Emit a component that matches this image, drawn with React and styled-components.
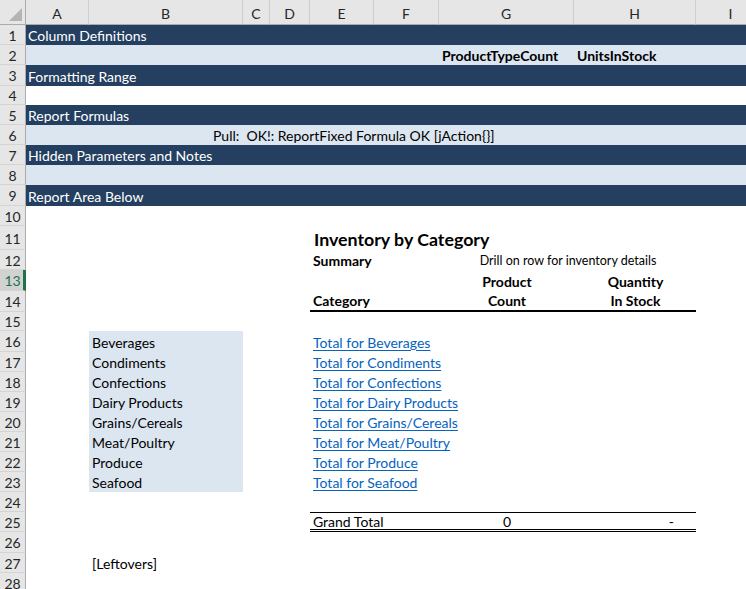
import React from 'react'
import styled, { createGlobalStyle } from 'styled-components'

const GlobalStyle = createGlobalStyle`
  html, body {
    margin: 0;
    padding: 0;
    background: #fff;
    overflow: hidden;
  }
`

const colWidths = [26, 63, 154, 27, 40, 64, 65, 135, 122, 70]
const colLetters = ['A', 'B', 'C', 'D', 'E', 'F', 'G', 'H', 'I']
const rowHeights = [20, 20, 21, 19, 20, 20, 20, 20, 21, 20, 24, 20, 21, 21, 19, 21, 20, 20, 20, 20, 20, 20, 20, 20, 20, 21, 20, 20]

const COL = { A: 2, B: 3, C: 4, D: 5, E: 6, F: 7, G: 8, H: 9, I: 10 }

const Sheet = styled.div`
  display: grid;
  grid-template-columns: ${colWidths.map(w => w + 'px').join(' ')};
  grid-template-rows: 25px ${rowHeights.map(h => h + 'px').join(' ')};
  width: 746px;
  height: 589px;
  overflow: hidden;
  font-family: Lato, "Open Sans", sans-serif;
  font-size: 14px;
  color: #000;
`

const Corner = styled.div`
  grid-row: 1;
  grid-column: 1;
  background: #e6e6e6;
  border-right: 1px solid #ababab;
  border-bottom: 1px solid #ababab;
  display: flex;
  align-items: flex-end;
  justify-content: flex-end;
  padding: 0 3px 3px 0;
`

const ColHeader = styled.div`
  grid-row: 1;
  grid-column: ${p => p.$col};
  background: #e6e6e6;
  border-bottom: 1px solid #ababab;
  border-right: 1px solid #cfcfcf;
  display: flex;
  align-items: center;
  justify-content: center;
  font-size: 14px;
  color: #262626;
  padding-top: 3px;
`

const RowHeader = styled.div`
  grid-column: 1;
  grid-row: ${p => p.$row + 1};
  background: ${p => (p.$active ? '#d2d2d2' : '#e6e6e6')};
  color: ${p => (p.$active ? '#217346' : '#262626')};
  border-bottom: 1px solid #d4d4d4;
  border-right: ${p => (p.$active ? '3px solid #217346' : '1px solid #ababab')};
  display: flex;
  align-items: center;
  justify-content: center;
  font-size: 14px;
  padding-top: 1px;
  padding-left: ${p => (p.$active ? '2px' : '0')};
`

const Band = styled.div`
  grid-column: 2 / -1;
  grid-row: ${p => p.$row + 1};
  display: flex;
  align-items: flex-end;
  background: ${p => (p.$tone === 'dark' ? '#243f60' : p.$tone === 'light' ? '#dce6f1' : '#fff')};
  color: ${p => (p.$tone === 'dark' ? '#fff' : '#000')};
  line-height: 18px;
  padding-left: 2px;
  white-space: nowrap;
`

const Cell = styled.div`
  grid-column: ${p => p.$col} / span ${p => p.$span || 1};
  grid-row: ${p => p.$row + 1};
  display: flex;
  align-items: flex-end;
  justify-content: ${p => (p.$align === 'center' ? 'center' : p.$align === 'right' ? 'flex-end' : 'flex-start')};
  padding: 0 ${p => p.$padRight || 2}px 0 3px;
  line-height: 18px;
  white-space: nowrap;
  font-weight: ${p => (p.$bold ? 700 : 400)};
  font-size: ${p => p.$size || 14}px;
  min-width: 0;
`

const HeadCell = styled(Cell)`
  border-bottom: 2px solid #000;
`

const TotalCell = styled(Cell)`
  border-top: 1px solid #000;
  border-bottom: 3px double #000;
  align-items: center;
  padding-top: 1px;
`

const Title = styled(Cell)`
  font-size: 17.8px;
  padding-bottom: 2px;
  padding-left: 4px;
`

const Shade = styled.div`
  grid-column: ${COL.B};
  grid-row: 17 / 25;
  background: #dce6f1;
`

const Link = styled.span`
  color: #0563c1;
  text-decoration: underline;
  text-underline-offset: 2px;
`

const categories = [
  'Beverages',
  'Condiments',
  'Confections',
  'Dairy Products',
  'Grains/Cereals',
  'Meat/Poultry',
  'Produce',
  'Seafood',
]

const bands = [
  { row: 1, tone: 'dark', text: 'Column Definitions' },
  { row: 2, tone: 'light' },
  { row: 3, tone: 'dark', text: 'Formatting Range' },
  { row: 5, tone: 'dark', text: 'Report Formulas' },
  { row: 6, tone: 'light' },
  { row: 7, tone: 'dark', text: 'Hidden Parameters and Notes' },
  { row: 8, tone: 'light' },
  { row: 9, tone: 'dark', text: 'Report Area Below' },
]

const App = () => (
  <>
    <GlobalStyle />
    <Sheet>
      <Corner>
        <svg width="13" height="13" viewBox="0 0 13 13">
          <polygon points="13,0 13,13 0,13" fill="#b4b4b4" />
        </svg>
      </Corner>
      {colLetters.map((l, i) => (
        <ColHeader key={l} $col={i + 2}>{l}</ColHeader>
      ))}
      {rowHeights.map((h, i) => (
        <RowHeader key={i} $row={i + 1} $active={i + 1 === 13}>{i + 1}</RowHeader>
      ))}

      {bands.map(b => (
        <Band key={b.row} $row={b.row} $tone={b.tone}>{b.text}</Band>
      ))}

      <Cell $row={2} $col={COL.G} $bold>ProductTypeCount</Cell>
      <Cell $row={2} $col={COL.H} $bold>UnitsInStock</Cell>
      <Cell $row={6} $col={COL.B} $span={7} style={{ paddingLeft: 124 }}>
        Pull:&nbsp; OK!: ReportFixed Formula OK [jAction{'{}'}]
      </Cell>

      <Title $row={11} $col={COL.E} $span={3} $bold>Inventory by Category</Title>
      <Cell $row={12} $col={COL.E} $span={2} $bold>Summary</Cell>
      <Cell $row={12} $col={COL.G} $span={2} $align="center" $size={12.5}>
        Drill on row for inventory details
      </Cell>
      <Cell $row={13} $col={COL.G} $align="center" $bold>Product</Cell>
      <Cell $row={13} $col={COL.H} $align="center" $bold>Quantity</Cell>
      <HeadCell $row={14} $col={COL.E} $span={2} $bold>Category</HeadCell>
      <HeadCell $row={14} $col={COL.G} $align="center" $bold>Count</HeadCell>
      <HeadCell $row={14} $col={COL.H} $align="center" $bold>In Stock</HeadCell>

      <Shade />
      {categories.map((c, i) => (
        <React.Fragment key={c}>
          <Cell $row={16 + i} $col={COL.B}>{c}</Cell>
          <Cell $row={16 + i} $col={COL.E} $span={3}>
            <Link>Total for {c}</Link>
          </Cell>
        </React.Fragment>
      ))}

      <TotalCell $row={25} $col={COL.E} $span={2}>Grand Total</TotalCell>
      <TotalCell $row={25} $col={COL.G} $align="center">0</TotalCell>
      <TotalCell $row={25} $col={COL.H} $align="right" $padRight={22}>-</TotalCell>

      <Cell $row={27} $col={COL.B}>[Leftovers]</Cell>
    </Sheet>
  </>
)

export default App
